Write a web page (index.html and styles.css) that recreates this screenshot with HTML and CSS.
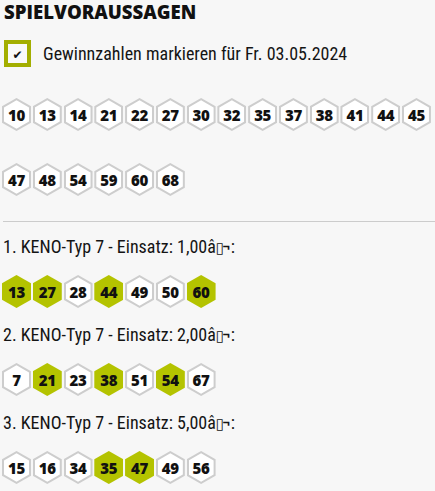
FILE: index.html
```html
<!DOCTYPE html>
<html lang="de">
<head>
<meta charset="utf-8">
<title>Spielvoraussagen</title>
<link rel="stylesheet" href="styles.css">
</head>
<body>
<div class="page">
  <h1 class="title">SPIELVORAUSSAGEN</h1>
  <label class="check">
    <span class="box"><span class="tick">✔</span></span>
    <span class="check-label">Gewinnzahlen markieren für Fr. 03.05.2024</span>
  </label>
  <div class="hexes all">
    <span class="hex"><b>10</b></span><span class="hex"><b>13</b></span><span class="hex"><b>14</b></span><span class="hex"><b>21</b></span><span class="hex"><b>22</b></span><span class="hex"><b>27</b></span><span class="hex"><b>30</b></span><span class="hex"><b>32</b></span><span class="hex"><b>35</b></span><span class="hex"><b>37</b></span><span class="hex"><b>38</b></span><span class="hex"><b>41</b></span><span class="hex"><b>44</b></span><span class="hex"><b>45</b></span><span class="hex"><b>47</b></span><span class="hex"><b>48</b></span><span class="hex"><b>54</b></span><span class="hex"><b>59</b></span><span class="hex"><b>60</b></span><span class="hex"><b>68</b></span>
  </div>
  <hr class="divider">
  <div class="tip">
    <p class="tip-title">1. KENO-Typ 7 - Einsatz: 1,00â<span class="tofu">▯</span>¬:</p>
    <div class="hexes">
      <span class="hex hit"><b>13</b></span><span class="hex hit"><b>27</b></span><span class="hex"><b>28</b></span><span class="hex hit"><b>44</b></span><span class="hex"><b>49</b></span><span class="hex"><b>50</b></span><span class="hex hit"><b>60</b></span>
    </div>
  </div>
  <div class="tip">
    <p class="tip-title">2. KENO-Typ 7 - Einsatz: 2,00â<span class="tofu">▯</span>¬:</p>
    <div class="hexes">
      <span class="hex"><b>7</b></span><span class="hex hit"><b>21</b></span><span class="hex"><b>23</b></span><span class="hex hit"><b>38</b></span><span class="hex"><b>51</b></span><span class="hex hit"><b>54</b></span><span class="hex"><b>67</b></span>
    </div>
  </div>
  <div class="tip">
    <p class="tip-title">3. KENO-Typ 7 - Einsatz: 5,00â<span class="tofu">▯</span>¬:</p>
    <div class="hexes">
      <span class="hex"><b>15</b></span><span class="hex"><b>16</b></span><span class="hex"><b>34</b></span><span class="hex hit"><b>35</b></span><span class="hex hit"><b>47</b></span><span class="hex"><b>49</b></span><span class="hex"><b>56</b></span>
    </div>
  </div>
</div>
</body>
</html>
```

FILE: styles.css
```css
html, body {
  margin: 0;
  padding: 0;
  background: #f7f7f7;
}

body {
  font-family: "Roboto Condensed", "Liberation Sans Narrow", "DejaVu Sans Condensed", Roboto, sans-serif;
  font-stretch: condensed;
  color: #141414;
}

.page {
  width: 435px;
  height: 491px;
  overflow: hidden;
}

.title {
  margin: 0;
  padding: 1px 0 0 4px;
  font-family: "Open Sans", sans-serif;
  font-stretch: normal;
  font-weight: 800;
  font-size: 18.6px;
  line-height: 22px;
  color: #111;
}

.check {
  display: flex;
  align-items: center;
  gap: 12px;
  margin: 17px 0 0 4px;
  font-size: 18px;
  line-height: 20px;
}

.box {
  box-sizing: border-box;
  width: 27px;
  height: 27px;
  border: 4px solid #a3ae00;
  background: #f9f9f9;
  display: flex;
  align-items: center;
  justify-content: center;
}

.tick {
  font-family: "DejaVu Sans", sans-serif;
  font-stretch: normal;
  font-size: 12px;
  line-height: 12px;
  color: #111;
  padding-top: 2px;
}

.hexes {
  display: flex;
  flex-wrap: wrap;
  column-gap: 1.77px;
  row-gap: 32px;
  padding-left: 2px;
}

.hexes.all {
  margin-top: 31px;
}

.hex {
  position: relative;
  width: 29px;
  height: 33px;
  display: flex;
  align-items: center;
  justify-content: center;
  background: #cdcdcd;
  clip-path: polygon(50% 0, 100% 25%, 100% 75%, 50% 100%, 0 75%, 0 25%);
}

.hex::before {
  content: "";
  position: absolute;
  inset: 2.3px 2px;
  background: #fff;
  clip-path: polygon(50% 0, 100% 25%, 100% 75%, 50% 100%, 0 75%, 0 25%);
}

.hex.hit {
  background: #b4c300;
}

.hex.hit::before {
  display: none;
}

.hex b {
  position: relative;
  font-family: "Open Sans", sans-serif;
  font-stretch: normal;
  font-weight: 800;
  font-size: 15px;
  line-height: 15px;
  letter-spacing: -0.3px;
  padding-top: 2px;
  color: #111;
}

.divider {
  border: 0;
  height: 1px;
  background: #cccccc;
  margin: 25px 0 0 3px;
}

.tip-title {
  margin: 15px 0 18px 3px;
  font-size: 18px;
  line-height: 20px;
}

.tip + .tip .tip-title {
  margin-top: 17px;
}

.tofu {
  font-family: "DejaVu Sans", sans-serif;
  font-stretch: normal;
  font-size: 15px;
  line-height: 10px;
  letter-spacing: -2px;
}
```
